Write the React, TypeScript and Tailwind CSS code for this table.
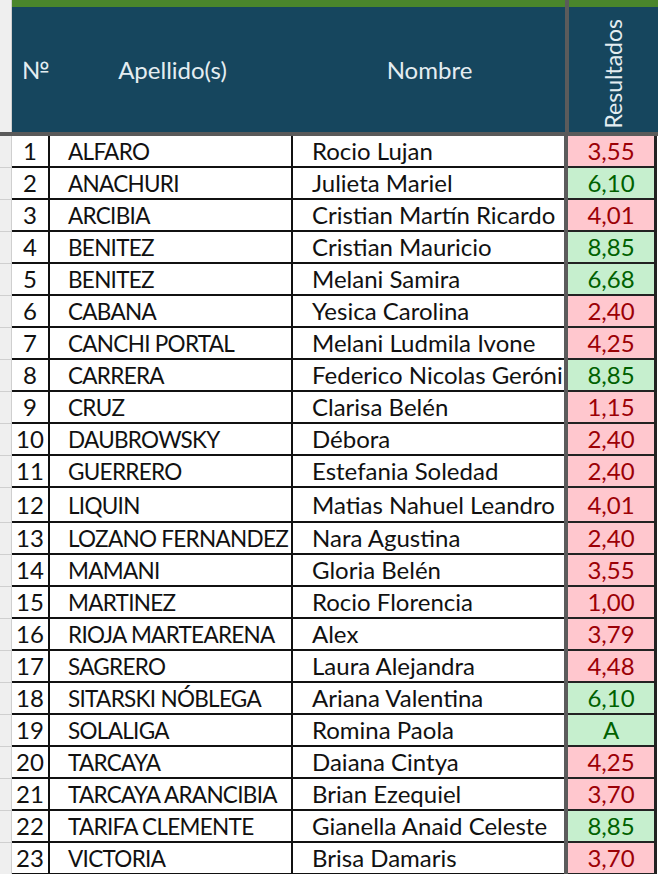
import React from "react";

type Row = { n: number; last: string; first: string; res: string; ok: boolean };

const rows: Row[] = [
  { n: 1, last: "ALFARO", first: "Rocio Lujan", res: "3,55", ok: false },
  { n: 2, last: "ANACHURI", first: "Julieta Mariel", res: "6,10", ok: true },
  { n: 3, last: "ARCIBIA", first: "Cristian Martín Ricardo", res: "4,01", ok: false },
  { n: 4, last: "BENITEZ", first: "Cristian Mauricio", res: "8,85", ok: true },
  { n: 5, last: "BENITEZ", first: "Melani Samira", res: "6,68", ok: true },
  { n: 6, last: "CABANA", first: "Yesica Carolina", res: "2,40", ok: false },
  { n: 7, last: "CANCHI PORTAL", first: "Melani Ludmila Ivone", res: "4,25", ok: false },
  { n: 8, last: "CARRERA", first: "Federico Nicolas Gerónimo", res: "8,85", ok: true },
  { n: 9, last: "CRUZ", first: "Clarisa Belén", res: "1,15", ok: false },
  { n: 10, last: "DAUBROWSKY", first: "Débora", res: "2,40", ok: false },
  { n: 11, last: "GUERRERO", first: "Estefania Soledad", res: "2,40", ok: false },
  { n: 12, last: "LIQUIN", first: "Matias Nahuel Leandro", res: "4,01", ok: false },
  { n: 13, last: "LOZANO FERNANDEZ", first: "Nara Agustina", res: "2,40", ok: false },
  { n: 14, last: "MAMANI", first: "Gloria Belén", res: "3,55", ok: false },
  { n: 15, last: "MARTINEZ", first: "Rocio Florencia", res: "1,00", ok: false },
  { n: 16, last: "RIOJA MARTEARENA", first: "Alex", res: "3,79", ok: false },
  { n: 17, last: "SAGRERO", first: "Laura Alejandra", res: "4,48", ok: false },
  { n: 18, last: "SITARSKI NÓBLEGA", first: "Ariana Valentina", res: "6,10", ok: true },
  { n: 19, last: "SOLALIGA", first: "Romina Paola", res: "A", ok: true },
  { n: 20, last: "TARCAYA", first: "Daiana Cintya", res: "4,25", ok: false },
  { n: 21, last: "TARCAYA ARANCIBIA", first: "Brian Ezequiel", res: "3,70", ok: false },
  { n: 22, last: "TARIFA CLEMENTE", first: "Gianella Anaid Celeste", res: "8,85", ok: true },
  { n: 23, last: "VICTORIA", first: "Brisa Damaris", res: "3,70", ok: false },
];

const font = { fontFamily: "Lato, 'Liberation Sans', sans-serif" };

export default function App() {
  return (
    <div className="w-[658px] h-[874px] overflow-hidden bg-white text-[24px] text-[#111]" style={font}>
      {/* header */}
      <div className="flex h-[132px]">
        <div className="w-[12px] bg-[#efefef] border-r border-[#cfcfcf]" />
        <div className="w-[553px] flex flex-col">
          <div className="h-[7px] bg-[#4a862c]" />
          <div className="flex-1 bg-[#16465e] text-[#e4edf1] grid grid-cols-[39px_243px_271px] items-center">
            <div className="pl-[10px]">№</div>
            <div className="text-center">Apellido(s)</div>
            <div className="text-center">Nombre</div>
          </div>
        </div>
        <div className="w-[4px] bg-[#5b5b5b]" />
        <div className="w-[89px] flex flex-col">
          <div className="h-[7px] bg-[#4a862c]" />
          <div className="flex-1 bg-[#16465e] text-[#e4edf1] flex items-end justify-center pb-[3px]">
            <span className="[writing-mode:vertical-rl] rotate-180 leading-none text-[23px]">Resultados</span>
          </div>
        </div>
      </div>
      <div className="h-[4px] bg-[#5a5a5a]" />

      {/* rows */}
      {rows.map((r) => (
        <div key={r.n} className={`flex ${r.n === 12 ? "h-[35px]" : "h-[32px]"}`}>
          <div className="w-[12px] bg-[#efefef] border-r border-b border-[#cfcfcf]" />
          <div className="w-[38px] flex items-center justify-center border-b-2 border-r-2 border-[#111]">
            {r.n}
          </div>
          <div className="w-[243px] flex items-center pl-[18px] pt-[2px] border-b-2 border-r-2 border-[#111] whitespace-nowrap overflow-hidden text-[22.5px] tracking-[-0.7px]">
            {r.last}
          </div>
          <div className="w-[271px] flex items-center pl-[19px] border-b-2 border-[#111] whitespace-nowrap overflow-hidden">
            {r.first}
          </div>
          <div className="w-[4px] bg-[#5b5b5b]" />
          <div
            className={`w-[89px] flex items-center justify-center border-b-2 border-r-[3px] border-[#222] ${
              r.ok ? "bg-[#c6efce] text-[#006100]" : "bg-[#ffc7ce] text-[#9c0006]"
            }`}
          >
            {r.res}
          </div>
        </div>
      ))}
    </div>
  );
}
